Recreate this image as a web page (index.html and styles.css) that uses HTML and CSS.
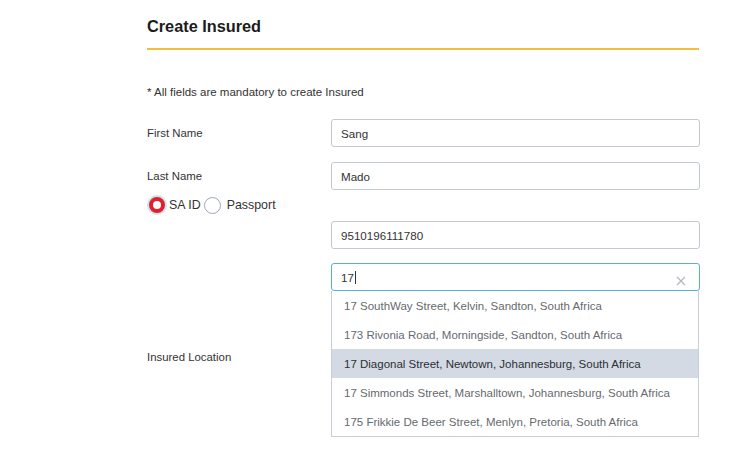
FILE: index.html
```html
<!DOCTYPE html>
<html>
<head>
<meta charset="utf-8">
<link rel="stylesheet" href="styles.css">
</head>
<body>
<main class="page">
  <header class="header">
    <h1 class="title">Create Insured</h1>
  </header>
  <p class="note">* All fields are mandatory to create Insured</p>
  <form class="form">
    <div class="row row-first">
      <label class="label">First Name</label>
      <div class="field"><div class="input">Sang</div></div>
    </div>
    <div class="row row-last">
      <label class="label">Last Name</label>
      <div class="field"><div class="input">Mado</div></div>
    </div>
    <div class="radios">
      <span class="radio radio-on"></span><span class="radio-text">SA ID</span>
      <span class="radio radio-off"></span><span class="radio-text radio-text-pass">Passport</span>
    </div>
    <div class="row row-id">
      <span class="label"></span>
      <div class="field"><div class="input">9510196111780</div></div>
    </div>
    <div class="row row-address">
      <label class="label label-location">Insured Location</label>
      <div class="field">
        <div class="input input-focus">17<span class="caret"></span>
          <svg class="clear" width="10" height="10" viewBox="0 0 10 10"><path d="M1 1L9 9M9 1L1 9" stroke="#b3b8bf" stroke-width="1.3" fill="none"/></svg>
        </div>
        <ul class="menu">
          <li class="item">17 SouthWay Street, Kelvin, Sandton, South Africa</li>
          <li class="item">173 Rivonia Road, Morningside, Sandton, South Africa</li>
          <li class="item item-active">17 Diagonal Street, Newtown, Johannesburg, South Africa</li>
          <li class="item">17 Simmonds Street, Marshalltown, Johannesburg, South Africa</li>
          <li class="item">175 Frikkie De Beer Street, Menlyn, Pretoria, South Africa</li>
        </ul>
      </div>
    </div>
  </form>
</main>
</body>
</html>
```

FILE: styles.css
```css
html, body {
  margin: 0;
  padding: 0;
  background: #ffffff;
}
body {
  font-family: "Liberation Sans", Arial, sans-serif;
  color: #333333;
  min-height: 451px;
}
.page {
  margin-left: 147px;
  width: 553px;
}
.header {
  padding-top: 16px;
  padding-bottom: 12px;
  border-bottom: 2px solid #f4bd3c;
  width: 552px;
}
.title {
  margin: 0;
  font-size: 16.3px;
  line-height: 20px;
  font-weight: bold;
  color: #1c1c1c;
}
.note {
  margin: 35px 0 0 0;
  font-size: 11.5px;
  line-height: 14px;
  color: #333333;
}
.form {
  display: flex;
  flex-direction: column;
  margin-top: 20px;
}
.row {
  display: flex;
  align-items: center;
}
.row-last { margin-top: 15px; }
.row-id { margin-top: 6px; }
.row-address {
  margin-top: 14px;
  align-items: flex-start;
}
.label {
  width: 184px;
  flex: none;
  font-size: 11.4px;
  line-height: 14px;
  color: #333333;
}
.label-location {
  padding-top: 87px;
}
.field {
  width: 369px;
}
.input {
  position: relative;
  box-sizing: border-box;
  height: 28px;
  border: 1px solid #c2c9d3;
  border-radius: 3px;
  padding-left: 9px;
  font-size: 11.6px;
  line-height: 27px;
  color: #333333;
  background: #fff;
}
.input-focus {
  border-color: #5aafde;
}
.caret {
  display: inline-block;
  width: 1px;
  height: 13px;
  background: #333;
  vertical-align: -2px;
  margin-left: 1px;
}
.clear {
  position: absolute;
  right: 13px;
  top: 12px;
}
.radios {
  display: flex;
  align-items: center;
  height: 20px;
  margin-top: 5px;
  padding-left: 2px;
}
.radio {
  box-sizing: border-box;
  display: inline-block;
  border-radius: 50%;
  flex: none;
}
.radio-on {
  width: 16px;
  height: 16px;
  border: 4px solid #e41f2b;
  background: #fff;
  box-shadow: 0 0 0 2px #c4e6f6;
}
.radio-off {
  width: 17px;
  height: 17px;
  border: 1px solid #9ba5b3;
  background: #fff;
  margin-left: 3px;
}
.radio-text {
  font-size: 12.4px;
  line-height: 14px;
  color: #333;
  margin-left: 4px;
}
.radio-text-pass {
  margin-left: 6px;
}
.menu {
  width: 368px;
  box-sizing: border-box;
  margin: 0;
  padding: 0;
  list-style: none;
  background: #fff;
  border: 1px solid #c8ced6;
  border-top: none;
}
.item {
  height: 27px;
  padding-top: 2px;
  line-height: 27px;
  padding-left: 12px;
  font-size: 11.5px;
  color: #666a70;
  white-space: nowrap;
}
.item-active {
  background: #d3dae3;
  color: #2d2f33;
}
```
